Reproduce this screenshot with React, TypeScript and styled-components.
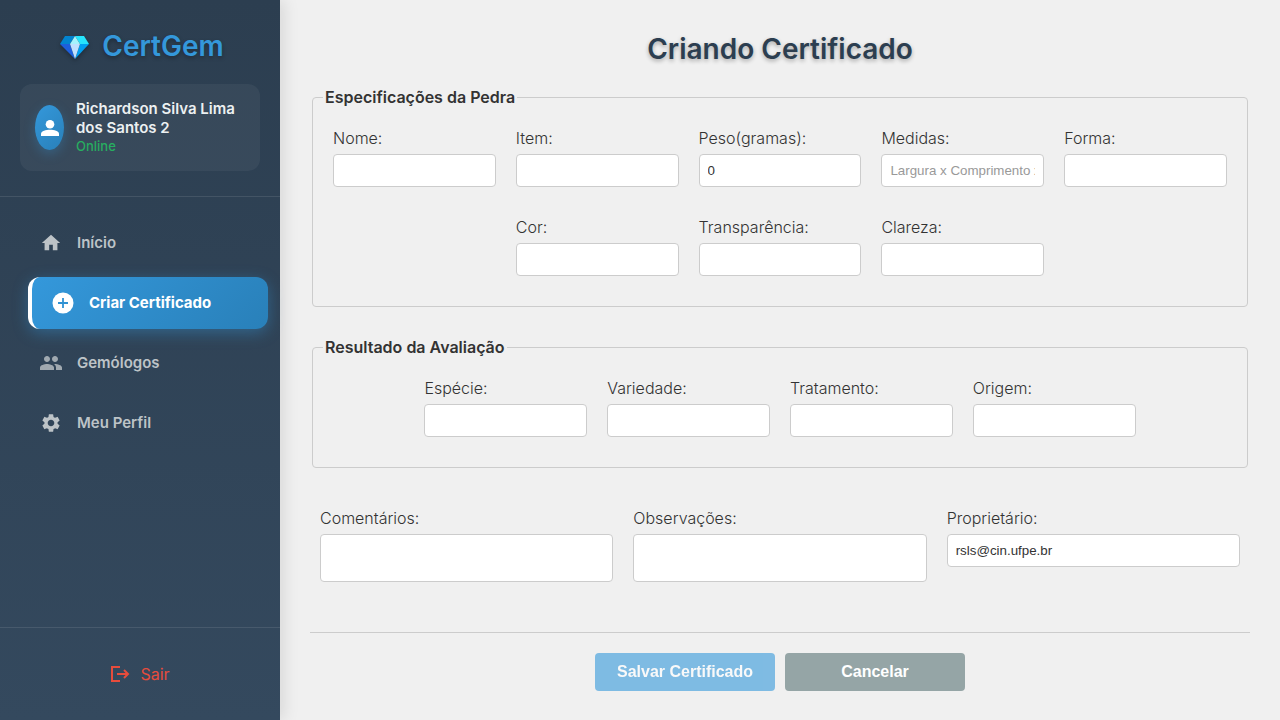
import React from "react";
import styled, { createGlobalStyle, css } from "styled-components";
import { MdHome, MdPeople, MdSettings } from "react-icons/md";

const GlobalStyle = createGlobalStyle`
  *, *::before, *::after { box-sizing: border-box; }
  body {
    margin: 0;
    background: #f0f0f0;
    color: #333;
    font-family: Inter, "Liberation Sans", sans-serif;
    font-size: 16px;
    line-height: 20px;
  }
`;

const Page = styled.div`
  display: flex;
  min-height: 100vh;
`;

const Sidebar = styled.aside`
  display: flex;
  flex-direction: column;
  flex: 0 0 280px;
  background: linear-gradient(180deg, #2c3e50 0%, #34495e 100%);
  box-shadow: 4px 0 15px rgba(0, 0, 0, 0.1);
`;

const SidebarHeader = styled.header`
  padding: 24px 20px 25px;
  border-bottom: 1px solid rgba(255, 255, 255, 0.1);
`;

const Brand = styled.div`
  display: flex;
  align-items: center;
  justify-content: center;
  gap: 12px;
  margin-bottom: 16px;
  padding-left: 4px;
  color: #3498db;
  font-size: 28px;
  font-weight: 600;
  line-height: 44px;
  text-shadow: 0 2px 4px rgba(0, 0, 0, 0.3);

  svg { filter: drop-shadow(0 2px 2px rgba(0, 0, 0, 0.3)); }
`;

const UserCard = styled.section`
  display: flex;
  align-items: center;
  gap: 12px;
  padding: 15px;
  border-radius: 12px;
  background: rgba(255, 255, 255, 0.05);
`;

const Avatar = styled.div`
  display: flex;
  flex: 0 0 29px;
  align-items: center;
  justify-content: center;
  height: 45px;
  border-radius: 50%;
  background: linear-gradient(135deg, #3498db, #2980b9);
  box-shadow: 0 4px 12px rgba(52, 152, 219, 0.3);
  color: #fff;

  svg { flex: none; }
`;

const UserName = styled.div`
  color: #ecf0f1;
  font-size: 15px;
  font-weight: 600;
  line-height: 19px;
`;

const UserStatus = styled.div`
  color: #27ae60;
  font-size: 13px;
  font-weight: 500;
  line-height: 19px;
`;

const Nav = styled.nav`
  flex: 1;
  padding: 20px 0;
`;

const NavList = styled.ul`
  display: flex;
  flex-direction: column;
  gap: 8px;
  margin: 0;
  padding: 0 20px;
  list-style: none;
`;

const NavLink = styled.a<{ $active?: boolean }>`
  display: flex;
  align-items: center;
  gap: 15px;
  padding: 14px 20px;
  border-radius: 12px;
  color: #bdc3c7;
  font-size: 15px;
  font-weight: 600;
  line-height: 24px;
  text-decoration: none;

  ${(p) =>
    p.$active &&
    css`
      margin: 0 -8px 0 8px;
      border-left: 4px solid #fff;
      background: linear-gradient(135deg, #3498db, #2980b9);
      box-shadow: 0 4px 15px rgba(52, 152, 219, 0.4);
      color: #fff;
      font-weight: 700;
    `}
`;

const NavIcon = styled.span<{ $dim?: boolean }>`
  display: flex;
  flex: 0 0 22px;
  min-width: 0;
  align-items: center;
  justify-content: center;
  height: 24px;
  opacity: ${(p) => (p.$dim ? 0.8 : 1)};

  svg { flex: none; }
`;

const SidebarFooter = styled.footer`
  padding: 20px;
  border-top: 1px solid rgba(255, 255, 255, 0.1);
`;

const LogoutButton = styled.button`
  display: flex;
  align-items: center;
  justify-content: center;
  gap: 10px;
  width: 100%;
  padding: 16px 20px;
  border: 0;
  background: none;
  color: #e74c3c;
  font-family: inherit;
  font-size: 16px;
  font-weight: 400;
  line-height: 20px;
`;

const Main = styled.main`
  flex: 1;
  min-width: 0;
  padding: 29px 30px;
`;

const Title = styled.h1`
  margin: 0 0 18px;
  color: #2c3e50;
  font-size: 28px;
  font-weight: 600;
  line-height: 40px;
  text-align: center;
  text-shadow: 0 2px 4px rgba(0, 0, 0, 0.3);
`;

const Group = styled.fieldset`
  min-width: 0;
  margin: 0 2px 30px;
  padding: 21px 20px 30px;
  border: 1px solid #ccc;
  border-radius: 4px;
`;

const GroupTitle = styled.legend`
  margin-left: -10px;
  padding: 0 2px;
  font-weight: 600;
`;

const FieldRow = styled.div<{ $columns: number }>`
  display: flex;
  flex-wrap: wrap;
  justify-content: center;
  gap: 30px 20px;

  > * {
    flex: 0 0 calc((100% - 20px * ${(p) => p.$columns - 1}) / ${(p) => p.$columns});
  }
`;

const DetailRow = styled(FieldRow)`
  align-items: flex-start;
  padding: 10px 10px 50px;
`;

const Field = styled.label`
  display: flex;
  flex-direction: column;
  gap: 6px;
  font-weight: 300;
`;

const control = css`
  width: 100%;
  margin: 0;
  padding: 8px;
  border: 1px solid #ccc;
  border-radius: 4px;
  background: #fff;
  color: #333;
  font-family: "Liberation Sans", Arial, sans-serif;
  line-height: 15px;
`;

const Input = styled.input`
  ${control}
  height: 33px;
  &::placeholder { color: #999; opacity: 1; }
`;

const TextArea = styled.textarea`
  ${control}
  display: block;
  height: 48px;
  resize: none;
`;

const Actions = styled.div`
  display: flex;
  justify-content: center;
  gap: 10px;
  padding-top: 20px;
  border-top: 1px solid #ccc;
`;

const ActionButton = styled.button<{ $primary?: boolean }>`
  width: 180px;
  padding: 10px;
  border: 0;
  border-radius: 4px;
  background: ${(p) => (p.$primary ? "#3498db" : "#95a5a6")};
  color: #fff;
  font-family: "Liberation Sans", Arial, sans-serif;
  font-size: 16px;
  font-weight: 700;
  line-height: 18px;

  &:disabled { opacity: 0.6; }
`;

const Gem = () => (
  <svg width="30" height="28" viewBox="0 0 30 28" aria-hidden="true">
    <path d="M5 4H15L10 12H0Z" fill="#0284d0" />
    <path d="M15 4H24L29 12H20Z" fill="#26e4fc" />
    <path d="M15 4L20 12H10Z" fill="#a5f3fc" />
    <path d="M0 12H10L15 27Z" fill="#1d5fdc" />
    <path d="M29 12H20L15 27Z" fill="#009ff0" />
    <path d="M10 12H20L15 27Z" fill="#bfe0ff" />
  </svg>
);

const PersonIcon = () => (
  <svg width="18" height="16" viewBox="0 0 18 16" fill="currentColor" aria-hidden="true">
    <circle cx="9" cy="4.3" r="4.3" />
    <path d="M0 16V13.8C0 11.2 5 9.8 9 9.8S18 11.2 18 13.8V16Z" />
  </svg>
);

const AddIcon = ({ size }: { size: number }) => (
  <svg width={size} height={size} viewBox="0 0 22 22" aria-hidden="true">
    <circle cx="11" cy="11" r="10.5" fill="currentColor" />
    <path d="M11 6V16M6 11H16" stroke="#3092d3" strokeWidth="1.8" />
  </svg>
);

const LogoutIcon = () => (
  <svg width="20" height="20" viewBox="0 0 20 20" fill="none" stroke="currentColor" strokeWidth="2" aria-hidden="true">
    <path d="M10 3H2V17H10M7 10H18M14 6L18 10L14 14" />
  </svg>
);

const specs = [
  { label: "Nome:" },
  { label: "Item:" },
  { label: "Peso(gramas):", value: "0" },
  { label: "Medidas:", placeholder: "Largura x Comprimento x Altura" },
  { label: "Forma:" },
  { label: "Cor:" },
  { label: "Transparência:" },
  { label: "Clareza:" },
];

const results = ["Espécie:", "Variedade:", "Tratamento:", "Origem:"];

const links = [
  { label: "Início", Icon: MdHome, size: 22 },
  { label: "Criar Certificado", Icon: AddIcon, size: 22, active: true },
  { label: "Gemólogos", Icon: MdPeople, size: 24, dim: true },
  { label: "Meu Perfil", Icon: MdSettings, size: 22 },
];

export default function App() {
  return (
    <Page>
      <GlobalStyle />
      <Sidebar>
        <SidebarHeader>
          <Brand>
            <Gem />
            <span>CertGem</span>
          </Brand>
          <UserCard>
            <Avatar>
              <PersonIcon />
            </Avatar>
            <div>
              <UserName>Richardson Silva Lima dos Santos 2</UserName>
              <UserStatus>Online</UserStatus>
            </div>
          </UserCard>
        </SidebarHeader>
        <Nav>
          <NavList>
            {links.map(({ label, Icon, size, active, dim }) => (
              <li key={label}>
                <NavLink href="#" $active={active} aria-current={active ? "page" : undefined}>
                  <NavIcon $dim={dim}>
                    <Icon size={size} />
                  </NavIcon>
                  {label}
                </NavLink>
              </li>
            ))}
          </NavList>
        </Nav>
        <SidebarFooter>
          <LogoutButton type="button">
            <LogoutIcon />
            Sair
          </LogoutButton>
        </SidebarFooter>
      </Sidebar>
      <Main>
        <Title>Criando Certificado</Title>
        <form>
          <Group>
            <GroupTitle>Especificações da Pedra</GroupTitle>
            <FieldRow $columns={5}>
              {specs.map(({ label, value, placeholder }) => (
                <Field key={label}>
                  {label}
                  <Input type="text" defaultValue={value} placeholder={placeholder} />
                </Field>
              ))}
            </FieldRow>
          </Group>
          <Group>
            <GroupTitle>Resultado da Avaliação</GroupTitle>
            <FieldRow $columns={5}>
              {results.map((label) => (
                <Field key={label}>
                  {label}
                  <Input type="text" />
                </Field>
              ))}
            </FieldRow>
          </Group>
          <DetailRow $columns={3}>
            <Field>
              Comentários:
              <TextArea />
            </Field>
            <Field>
              Observações:
              <TextArea />
            </Field>
            <Field>
              Proprietário:
              <Input type="text" defaultValue="rsls@cin.ufpe.br" />
            </Field>
          </DetailRow>
          <Actions>
            <ActionButton type="submit" $primary disabled>
              Salvar Certificado
            </ActionButton>
            <ActionButton type="button">Cancelar</ActionButton>
          </Actions>
        </form>
      </Main>
    </Page>
  );
}
